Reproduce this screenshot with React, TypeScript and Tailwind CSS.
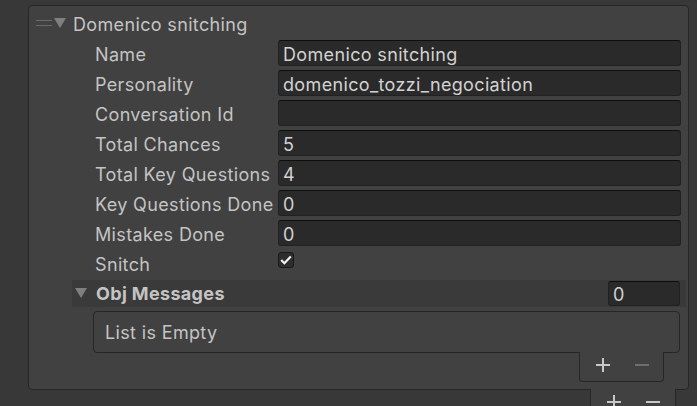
import React from 'react';

const fields: { label: string; value: string }[] = [
  { label: 'Name', value: 'Domenico snitching' },
  { label: 'Personality', value: 'domenico_tozzi_negociation' },
  { label: 'Conversation Id', value: '' },
  { label: 'Total Chances', value: '5' },
  { label: 'Total Key Questions', value: '4' },
  { label: 'Key Questions Done', value: '0' },
  { label: 'Mistakes Done', value: '0' },
];

const Foldout = () => (
  <svg width="12" height="11" viewBox="0 0 12 11" className="shrink-0">
    <polygon points="0,0 12,0 6,10" fill="#7f7f7f" />
  </svg>
);

const PlusMinus: React.FC<{ minusDim?: boolean }> = ({ minusDim }) => (
  <div className="flex items-center h-[26px] pl-[16px] gap-[25px]">
    <svg width="14" height="14" viewBox="0 0 14 14">
      <path d="M0 7h14M7 0v14" stroke="#c8c8c8" strokeWidth="2" />
    </svg>
    <svg width="14" height="14" viewBox="0 0 14 14">
      <path d="M0 7h14" stroke={minusDim ? '#6e6e6e' : '#c8c8c8'} strokeWidth="2" />
    </svg>
  </div>
);

const App: React.FC = () => {
  return (
    <div className="w-[697px] h-[406px] bg-[#383838] overflow-hidden pl-[28px] pt-[5px] font-['Inter',sans-serif] text-[18px] tracking-[0.35px] text-[#c4c4c4]">
      <div className="w-[661px] h-[385px] bg-[#414141] border border-[#262626] rounded-[4px] pt-[4px] flex flex-col gap-[4px] relative z-0">
        {/* element header */}
        <div className="h-[26px] flex items-center pl-[7px]">
          <svg width="16" height="8" viewBox="0 0 16 8" className="shrink-0">
            <path d="M0 1.5h16M0 6.5h16" stroke="#6a6a6a" strokeWidth="1" />
          </svg>
          <div className="ml-[2px]"><Foldout /></div>
          <span className="ml-[7px] mt-[3px] leading-none">Domenico snitching</span>
        </div>

        {fields.map((f) => (
          <div key={f.label} className="h-[26px] flex items-center pl-[66px] pr-[7px]">
            <span className="w-[183px] shrink-0 mt-[3px] leading-none whitespace-nowrap">{f.label}</span>
            <div className="flex-1 h-[26px] bg-[#2a2a2a] border border-[#212121] border-t-[#0e0e0e] rounded-[3px] flex items-center pl-[4px] text-[#d2d2d2] leading-none">
              <span className="mt-[3px]">{f.value}</span>
            </div>
          </div>
        ))}

        <div className="h-[26px] flex items-start pl-[66px]">
          <span className="w-[183px] shrink-0 leading-none mt-[6px]">Snitch</span>
          <div className="w-[16px] h-[16px] mt-[2px] bg-[#2d2d2d] border border-[#1a1a1a] rounded-[3px] flex items-center justify-center">
            <svg width="12" height="10" viewBox="0 0 12 10">
              <path d="M1.2 5L4.4 8.2L10.8 1.6" stroke="#f2f2f2" strokeWidth="2.2" fill="none" />
            </svg>
          </div>
        </div>

        {/* Obj Messages list */}
        <div className="flex flex-col">
          <div className="h-[27px] ml-[43px] mr-[2px] bg-[#3a3a3a] flex items-center pl-[3px] pr-[6px]">
            <Foldout />
            <span className="ml-[9px] font-bold leading-none">Obj Messages</span>
            <div className="ml-auto w-[72px] h-[25px] bg-[#2a2a2a] border border-[#212121] border-t-[#0e0e0e] rounded-[3px] flex items-center pl-[4px] text-[#d2d2d2] leading-none">
              <span className="mt-[2px]">0</span>
            </div>
          </div>
          <div className="mt-[4px] ml-[64px] mr-[8px] h-[42px] border border-[#262626] rounded-[4px] flex items-center pl-[11px] leading-none">
            <span className="mt-[2px]">List is Empty</span>
          </div>
          <div className="flex justify-end mr-[24px]">
            <div className="-mt-[1px] w-[85px] h-[30px] bg-[#414141] border-x border-b border-[#262626] rounded-b-[4px] relative z-10">
              <PlusMinus minusDim />
            </div>
          </div>
        </div>
      </div>

      <div className="w-[661px] flex justify-end pr-[13px]">
        <div className="-mt-[1px] w-[86px] h-[30px] bg-[#414141] border-x border-b border-[#262626] rounded-b-[4px] relative z-10">
          <PlusMinus />
        </div>
      </div>
    </div>
  );
};

export default App;
